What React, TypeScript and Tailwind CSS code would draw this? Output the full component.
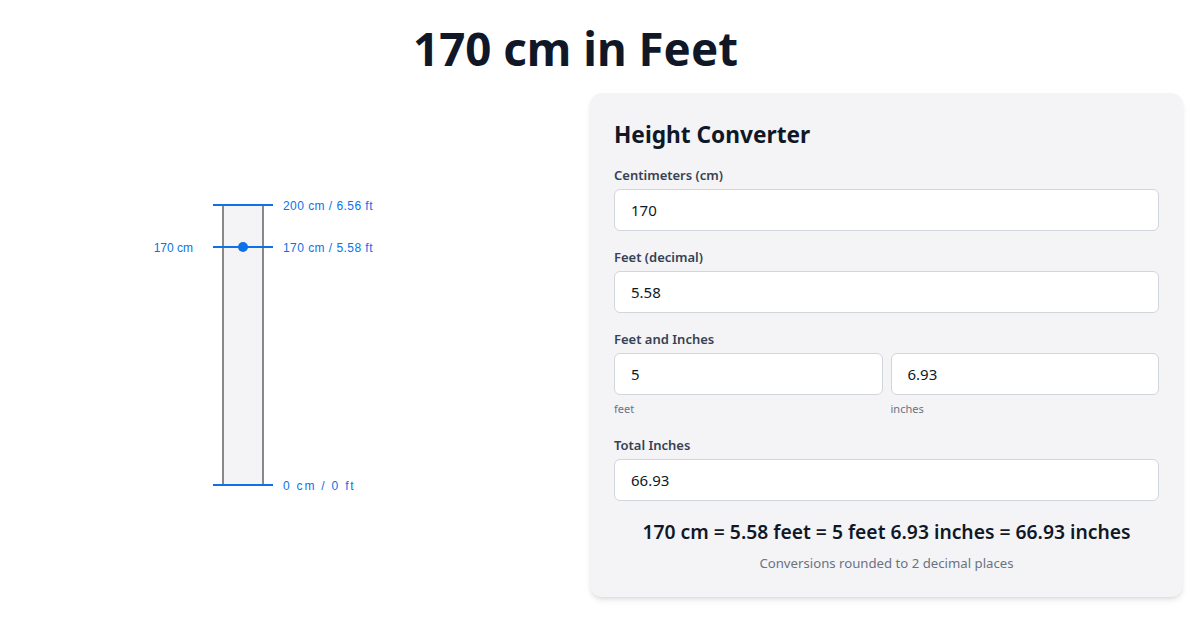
import { useState } from 'react'

const font = { fontFamily: '"Noto Sans", "Open Sans", sans-serif' }

function Ruler({ cm }: { cm: number }) {
  // 200 cm maps to 280px, bottom of the bar sits at y=485
  const y = (v: number) => 485 - v * 1.4
  const ft = (v: number) => (v / 30.48).toFixed(2)
  const blue = '#0b72e7'
  return (
    <svg width="590" height="504" viewBox="0 93 590 504" className="block">
      <rect x="223" y="205" width="40" height="280" fill="#f4f4f6" stroke="#888" strokeWidth="2" />
      <line x1="213" x2="273" y1="205" y2="205" stroke={blue} strokeWidth="2" />
      <line x1="213" x2="273" y1={y(cm)} y2={y(cm)} stroke={blue} strokeWidth="2" />
      <line x1="213" x2="273" y1="485" y2="485" stroke={blue} strokeWidth="2" />
      <circle cx="243" cy={y(cm)} r="5" fill={blue} />
      <g fill={blue} fontSize="12" fontFamily='"Liberation Sans", Arial, sans-serif' dominantBaseline="middle">
        <text x="283" y="207" letterSpacing="0.45">200 cm / {ft(200)} ft</text>
        <text x="283" y={y(cm) + 2} letterSpacing="0.45">{cm} cm / {ft(cm)} ft</text>
        <text x="283" y="487" letterSpacing="1.8">0 cm / 0 ft</text>
        <text x="193" y={y(cm) + 2} textAnchor="end">{cm} cm</text>
      </g>
    </svg>
  )
}

function Field({ label, value, onChange }: { label: string; value: string; onChange: (v: string) => void }) {
  return (
    <div>
      <label className="block text-[13px] leading-5 font-semibold text-gray-700 mb-1">{label}</label>
      <input
        value={value}
        onChange={(e) => onChange(e.target.value)}
        className="w-full h-[42px] px-4 bg-white border border-gray-300 rounded-md text-[15px] text-gray-900 outline-none"
      />
    </div>
  )
}

export default function App() {
  const [cm, setCm] = useState('170')
  const n = parseFloat(cm) || 0
  const inches = n / 2.54
  const feet = n / 30.48
  const whole = Math.floor(inches / 12)
  const rest = inches - whole * 12

  return (
    <div className="w-[1200px] h-[630px] bg-white overflow-hidden" style={font}>
      <h1 className="w-[1151px] text-center text-[45.7px] font-bold text-gray-900 pt-[20px] h-[93px] leading-[56px]">
        {n} cm in Feet
      </h1>
      <div className="flex">
        <div className="w-[590px]">
          <Ruler cm={n} />
        </div>
        <div className="w-[593px] bg-[#f4f4f6] rounded-xl shadow-md px-6 pt-[26px] pb-6">
          <h2 className="text-[22.7px] leading-8 font-bold text-gray-900 mb-[14px]">Height Converter</h2>
          <div className="flex flex-col gap-4">
            <Field label="Centimeters (cm)" value={cm} onChange={setCm} />
            <Field label="Feet (decimal)" value={feet.toFixed(2)} onChange={() => {}} />
            <div>
              <label className="block text-[13px] leading-5 font-semibold text-gray-700 mb-1">Feet and Inches</label>
              <div className="grid grid-cols-2 gap-2">
                <div>
                  <input
                    value={String(whole)}
                    readOnly
                    className="w-full h-[42px] px-4 bg-white border border-gray-300 rounded-md text-[15px] text-gray-900 outline-none"
                  />
                  <div className="text-[11px] leading-4 text-gray-500 mt-1.5 mb-0.5">feet</div>
                </div>
                <div>
                  <input
                    value={rest.toFixed(2)}
                    readOnly
                    className="w-full h-[42px] px-4 bg-white border border-gray-300 rounded-md text-[15px] text-gray-900 outline-none"
                  />
                  <div className="text-[11px] leading-4 text-gray-500 mt-1.5 mb-0.5">inches</div>
                </div>
              </div>
            </div>
            <Field label="Total Inches" value={inches.toFixed(2)} onChange={() => {}} />
          </div>
          <p className="mt-[17px] text-center text-[19.3px] leading-7 font-semibold text-gray-900">
            {n} cm = {feet.toFixed(2)} feet = {whole} feet {rest.toFixed(2)} inches = {inches.toFixed(2)} inches
          </p>
          <p className="mt-[7px] text-center text-[13.2px] leading-5 text-gray-500">Conversions rounded to 2 decimal places</p>
        </div>
      </div>
    </div>
  )
}
